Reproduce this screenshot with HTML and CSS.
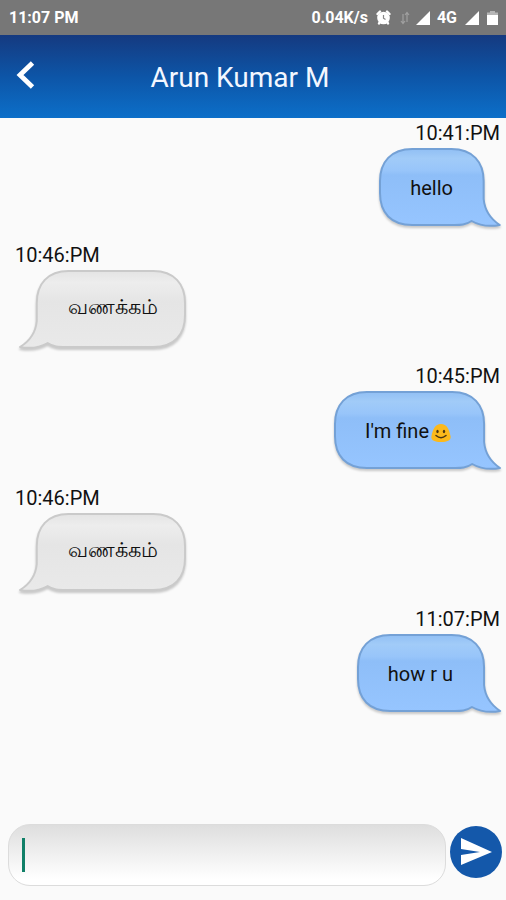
FILE: index.html
```html
<!DOCTYPE html>
<html lang="en">
<head>
<meta charset="utf-8">
<meta name="viewport" content="width=device-width, initial-scale=1">
<title>Arun Kumar M</title>
<link rel="stylesheet" href="styles.css">
</head>
<body>
<svg class="defs" aria-hidden="true">
  <defs>
    <linearGradient id="blue" x1="0" y1="0" x2="0" y2="1">
      <stop offset="0" stop-color="#91bff4"/>
      <stop offset=".12" stop-color="#a1cbf8"/>
      <stop offset=".28" stop-color="#98c5fa"/>
      <stop offset=".34" stop-color="#8ebef8"/>
      <stop offset="1" stop-color="#96c5ff"/>
    </linearGradient>
    <linearGradient id="grey" x1="0" y1="0" x2="0" y2="1">
      <stop offset="0" stop-color="#e4e4e4"/>
      <stop offset=".15" stop-color="#ededed"/>
      <stop offset=".4" stop-color="#e5e5e5"/>
      <stop offset="1" stop-color="#e9e9e9"/>
    </linearGradient>
  </defs>
</svg>
<div class="screen">
  <div class="status">
    <span>11:07 PM</span>
    <div class="indicators">
      <span>0.04K/s</span>
      <svg class="alarm" width="15" height="15" viewBox="0 0 15 15" aria-hidden="true">
        <circle cx="7.500" cy="8" r="6.300" fill="#fff"/>
        <path d="M1.500 4L4 1.500M13.500 4L11 1.500M3.500 12.500L3 13.500M11.500 12.500L12 13.500" stroke="#fff" stroke-width="2.400" stroke-linecap="round"/>
        <path d="M7.500 5V8.200L9.500 9.500" fill="none" stroke="#888" stroke-width="1.200"/>
      </svg>
      <svg class="data" width="10" height="14" viewBox="0 0 10 14" aria-hidden="true">
        <path d="M3 3V12M1 10L3 12.500L5 10M7 11V2M5 4L7 1.500L9 4" fill="none" stroke="#a0a0a0" stroke-width="1.200"/>
      </svg>
      <svg class="signal" width="14" height="14" viewBox="0 0 14 14" aria-hidden="true"><path d="M0 14L14 0V14Z" fill="#fff"/></svg>
      <span class="network">4G</span>
      <svg class="signal-two" width="14" height="14" viewBox="0 0 14 14" aria-hidden="true"><path d="M0 14L14 0V14Z" fill="#fff"/></svg>
      <svg width="11" height="14" viewBox="0 0 11 14" aria-hidden="true">
        <path d="M3 0H8V1.500H11V4H0V1.500H3Z" fill="#b5b5b5"/><path d="M0 4H11V14H0Z" fill="#fff"/>
      </svg>
    </div>
  </div>
  <header class="bar">
    <button class="back" type="button" aria-label="Back">
      <svg width="20" height="30" viewBox="0 0 20 30" aria-hidden="true"><path d="M17.500 3L5 15L17.500 27" fill="none" stroke="#fff" stroke-width="4.800"/></svg>
    </button>
    <h1>Arun Kumar M</h1>
  </header>
  <main class="chat">
    <article class="message sent">
      <time>10:41:PM</time>
      <div class="bubble">
        <svg class="shape" viewBox="0 0 123 82" preserveAspectRatio="none" aria-hidden="true"><path fill="url(#blue)" d="M34 2H73C94 2 105 15 105 34V52C106 63 112 72 121 78C110 80 100 78 93 74C87 78 82 78 76 78H34C13 78 2 66 2 46V34C2 15 13 2 34 2Z"/></svg>
        <p>hello</p>
      </div>
    </article>
    <article class="message received">
      <time>10:46:PM</time>
      <div class="bubble">
        <svg class="shape" viewBox="0 0 171 82" preserveAspectRatio="none" aria-hidden="true"><path fill="url(#grey)" d="M51 2H137C158 2 169 15 169 34V46C169 66 158 78 137 78H48C41 78 36 78 30 74C23 78 13 80 2 78C12 72 18 63 19 52V34C19 15 30 2 51 2Z"/></svg>
        <p lang="ta">வணக்கம்</p>
      </div>
    </article>
    <article class="message sent">
      <time>10:45:PM</time>
      <div class="bubble">
        <svg class="shape" viewBox="0 0 170 82" preserveAspectRatio="none" aria-hidden="true"><path fill="url(#blue)" d="M34 2H120C141 2 152 15 152 34V52C153 63 159 72 168 78C157 80 147 78 140 74C134 78 129 78 123 78H34C13 78 2 66 2 46V34C2 15 13 2 34 2Z"/></svg>
        <p>I'm fine<svg class="smile" width="20" height="18" viewBox="0 0 20 18" role="img" aria-label="smiling face"><path d="M10 0C16 0 18 5 19.500 12C20.500 16 17 18 10 18S-.500 16 .500 12C2 5 4 0 10 0Z" fill="#fcb91b"/><ellipse cx="6.500" cy="7.500" rx="1.200" ry="1.700" fill="#493613"/><ellipse cx="13" cy="7.500" rx="1.200" ry="1.700" fill="#493613"/><path d="M5 11.500Q10 16 15 11.500" fill="none" stroke="#493613" stroke-width="1.500" stroke-linecap="round"/></svg></p>
      </div>
    </article>
    <article class="message received">
      <time>10:46:PM</time>
      <div class="bubble">
        <svg class="shape" viewBox="0 0 171 82" preserveAspectRatio="none" aria-hidden="true"><path fill="url(#grey)" d="M51 2H137C158 2 169 15 169 34V46C169 66 158 78 137 78H48C41 78 36 78 30 74C23 78 13 80 2 78C12 72 18 63 19 52V34C19 15 30 2 51 2Z"/></svg>
        <p lang="ta">வணக்கம்</p>
      </div>
    </article>
    <article class="message sent">
      <time>11:07:PM</time>
      <div class="bubble">
        <svg class="shape" viewBox="0 0 145 82" preserveAspectRatio="none" aria-hidden="true"><path fill="url(#blue)" d="M34 2H95C116 2 127 15 127 34V52C128 63 134 72 143 78C132 80 122 78 115 74C109 78 104 78 98 78H34C13 78 2 66 2 46V34C2 15 13 2 34 2Z"/></svg>
        <p>how r u</p>
      </div>
    </article>
  </main>
  <form class="composer">
    <div class="field">
      <input type="text" aria-label="Message">
      <span class="caret"></span>
    </div>
    <button class="send" type="button" aria-label="Send">
      <svg width="52" height="52" viewBox="0 0 52 52" aria-hidden="true"><path d="M11 12L42 26L11 39V29L30 26L11 23Z" fill="#fff"/></svg>
    </button>
  </form>
</div>
</body>
</html>
```
FILE: styles.css
```css
* {
  box-sizing: border-box;
}

body {
  margin: 0;
  background: #fafafa;
  color: #111;
  font-family: Roboto, "Noto Sans", sans-serif;
}

.defs {
  position: absolute;
  width: 0;
  height: 0;
}

.screen {
  display: flex;
  flex-direction: column;
  min-height: 100vh;
}

.status {
  display: flex;
  align-items: center;
  justify-content: space-between;
  height: 35px;
  padding: 0 8px 0 9px;
  background: #777;
  color: #fff;
  font-size: 16px;
  font-weight: 700;
}

.indicators {
  display: flex;
  align-items: center;
}

.indicators svg {
  flex: none;
}

.alarm {
  margin-left: 8px;
}

.data {
  margin-left: 9px;
}

.signal {
  margin-left: 6px;
}

.network {
  margin-left: 7px;
}

.signal-two {
  margin: 0 8px;
}

.bar {
  display: grid;
  grid-template-columns: 52px 1fr 78px;
  align-items: center;
  height: 83px;
  padding-top: 2px;
  background: linear-gradient(#153a80, #0d55a7 50%, #0c6fc9);
  color: #f3f7ff;
}

.back {
  padding: 0 0 6px 15px;
  border: 0;
  background: none;
}

.back svg {
  display: block;
}

h1 {
  margin: 0;
  font-size: 28px;
  font-weight: 400;
  text-align: center;
}

.chat {
  flex: 1;
  padding-top: 1px;
}

.message {
  display: flex;
  flex-direction: column;
  align-items: flex-start;
  padding: 0 4px 0 18px;
}

.sent {
  align-items: flex-end;
  margin-bottom: 12px;
}

.received {
  margin-bottom: 11px;
}

time {
  height: 28px;
  font-size: 20px;
  line-height: 28px;
  margin: 0 2px 0 -3px;
}

.bubble {
  position: relative;
  height: 82px;
}

.sent .bubble {
  padding: 0 49px 0 32px;
}

.received .bubble {
  padding: 0 29px 0 50px;
}

.shape {
  position: absolute;
  inset: 0;
  width: 100%;
  height: 100%;
  overflow: visible;
  stroke: #74a1d6;
  stroke-width: 2;
  stroke-linejoin: round;
  filter: drop-shadow(0 2px 1px #0003);
}

.received .shape {
  stroke: #cacaca;
}

.bubble p {
  position: relative;
  margin: 0;
  font-size: 20px;
  line-height: 82px;
  white-space: nowrap;
}

.received p {
  font-size: 21px;
  line-height: 76px;
}

.smile {
  margin: 0 2px;
  vertical-align: -4px;
}

.composer {
  display: flex;
  align-items: center;
  gap: 4px;
  padding: 0 4px 14px 8px;
}

.field {
  position: relative;
  flex: 1;
}

.field input {
  display: block;
  width: 100%;
  height: 62px;
  padding: 0 16px;
  border: 1px solid #dcdcdc;
  border-radius: 22px;
  outline: 0;
  background: linear-gradient(#dedede, #fff 90%);
  font: 20px Roboto, sans-serif;
}

.caret {
  position: absolute;
  top: 14px;
  left: 14px;
  width: 3px;
  height: 34px;
  background: #108068;
}

.send {
  width: 52px;
  height: 52px;
  margin-bottom: 6px;
  padding: 0;
  border: 0;
  border-radius: 50%;
  background: #1458aa;
}

.send svg {
  display: block;
}
```
